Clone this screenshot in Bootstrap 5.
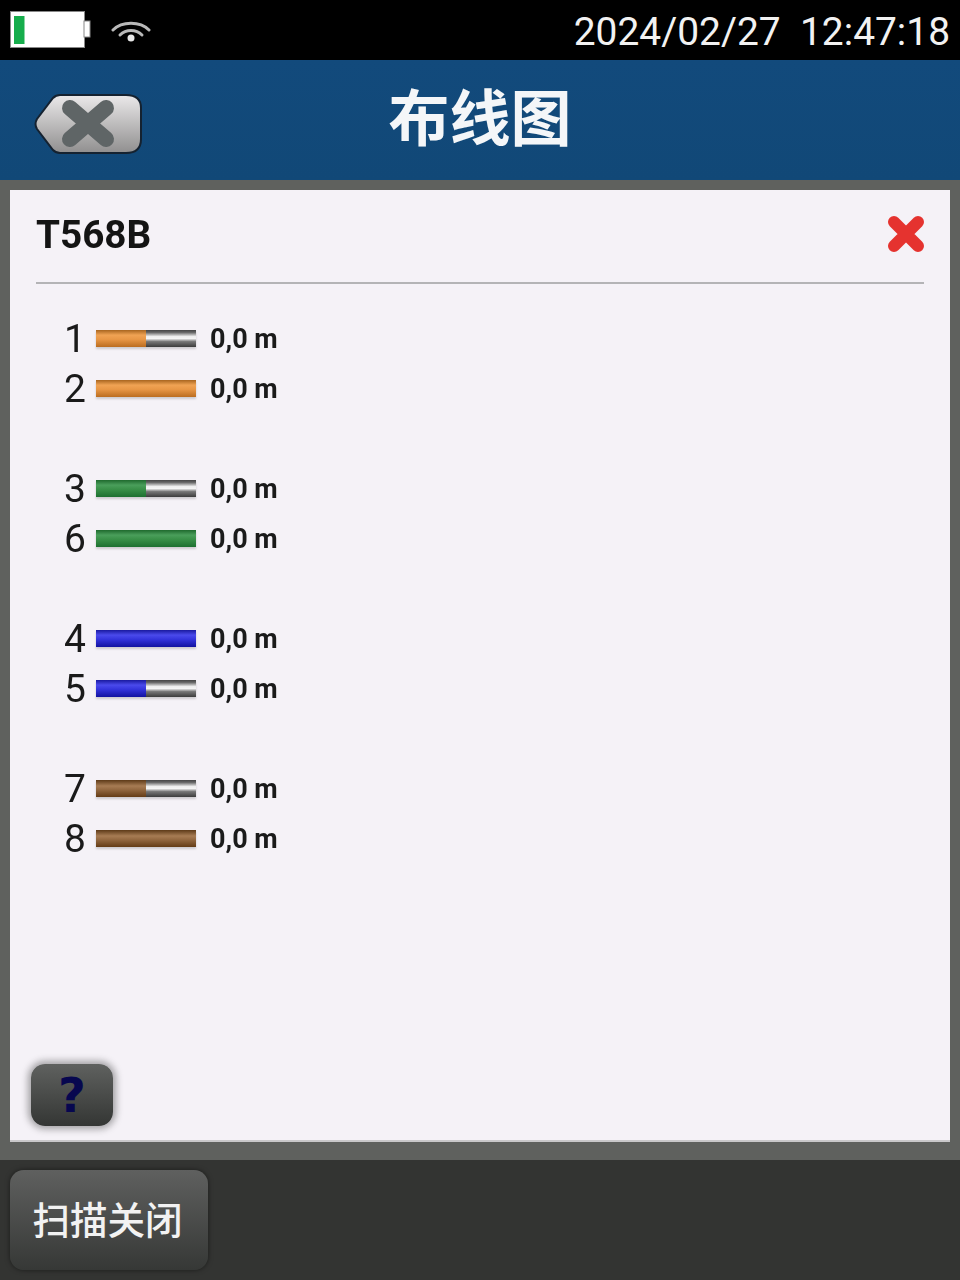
<!DOCTYPE html>
<html lang="zh"><head><meta charset="utf-8">
<link href="https://cdn.jsdelivr.net/npm/bootstrap@5.3.0/dist/css/bootstrap.min.css" rel="stylesheet">
<style>
html,body{margin:0;height:1280px;overflow:hidden}
body{font-family:Roboto,"Noto Sans CJK SC",sans-serif;background:#5f615e;color:#111}
.appshell{width:960px;height:1280px}
.statusrow{height:60px;background:#000;color:#f2f2f2;padding:0 10px}
.clock{font-size:38.900px;line-height:60px;margin-top:3px;white-space:pre}
.wifiicon{margin-left:19px}
.titlerow{height:120px;background:linear-gradient(#124a7c,#114877);padding-left:34px}
.backicon{margin-top:12px}
.titletext{left:0;right:0;top:0;bottom:0;font:700 61px/110px "Noto Sans CJK SC",sans-serif;color:#f4f6f8;text-align:center;pointer-events:none;filter:blur(.5px)}
.stage{height:980px;padding:10px 10px 18px}
.sheet{height:952px;background:#f5f2f7;padding:0 26px;border-bottom:2px solid #c9c8ca}
.sheethead{height:94px;border-bottom:2px solid #b4b4b6}
.sheettitle{font-size:38.700px;font-weight:700;line-height:1;margin:-2px 0 0;color:#141414;filter:blur(.5px)}
.closeicon{margin:-5px -1px 0 0;filter:blur(.6px)}
.wirelist{padding-top:29px}
.wiregroup{margin-bottom:50px}
.wirerow{height:50px}
.pinno{width:50px;text-align:right;font-size:39px;line-height:50px;margin-top:2px;color:#1a1a1a;filter:blur(.5px)}
.cable{width:100px;height:17px;margin-left:10px;box-shadow:0 2px 2px rgba(0,0,0,.16)}
.half{width:50px;height:100%}
.lenval{font-size:27px;font-weight:700;line-height:50px;margin-top:2px;margin-left:14px;color:#1a1a1a;filter:blur(.5px)}
.co{background:linear-gradient(#a8651f,#f0a354 30%,#e89746 55%,#bb6d20)}
.cg{background:linear-gradient(#1f6a2e,#4a9e5b 30%,#399048 55%,#1d7030)}
.cb{background:linear-gradient(#1a1aa0,#4a4aec 30%,#3434dc 55%,#1212a0)}
.cn{background:linear-gradient(#5d3a18,#a77c54 35%,#956a42 55%,#643c16)}
.cw{background:linear-gradient(#444,#666 14%,#eee 38%,#f4f4f4 50%,#777 68%,#3c3c3c)}
.helpbtn{left:21px;bottom:14px;width:82px;height:62px;border-radius:14px;background:linear-gradient(#5f615f,#343634);box-shadow:0 0 7px 3px rgba(40,40,40,.4);color:#07074f;font-size:48px;font-weight:900;line-height:62px;text-align:center;font-family:"DejaVu Sans",sans-serif}
.bottomrow{height:120px;background:#333432;padding:10px}
.scanbtn{width:198px;height:100px;border-radius:14px;border:0;background:linear-gradient(#5f605f,#363836);color:#f2f2f2;font:500 37.500px/96px "Noto Sans CJK SC",sans-serif;padding:0 3px 4px 0;box-shadow:0 0 5px rgba(0,0,0,.5)}
</style></head><body>
<div class="appshell d-flex flex-column">
 <div class="statusrow d-flex align-items-center justify-content-between">
  <div class="d-flex align-items-center">
   <svg width="82" height="38" viewBox="0 0 82 38"><rect x=".5" y=".5" width="74" height="36" fill="#fff" stroke="#888"/><rect x="74" y="10" width="6" height="16" fill="#fff" stroke="#888"/><rect x="4" y="5" width="10.500" height="28" fill="#16ad4c"/></svg>
   <svg class="wifiicon" width="40" height="26" viewBox="0 0 40 26" fill="none" stroke="#b9b9b9" stroke-linecap="round" stroke-width="3"><path d="M2 13C11 4 29 4 38 13"/><path d="M9 18C15 12 25 12 31 18"/><circle cx="20" cy="21" r="3.500" fill="#e8e8e8" stroke="none"/></svg>
  </div>
  <div class="clock">2024/02/27  12:47:18</div>
 </div>
 <div class="titlerow position-relative d-flex align-items-center">
  <svg class="backicon position-relative" width="110" height="66" viewBox="0 0 110 66"><defs><linearGradient id="bk" x1="0" y1="0" x2="0" y2="1"><stop offset="0" stop-color="#ebe9ea"/><stop offset="1" stop-color="#908f8f"/></linearGradient></defs><path d="M26 2H92Q107 2 107 15V46Q107 60 92 60H26Q22 60 19 57L3 36Q0 31 3 26L19 5Q22 2 26 2Z" fill="url(#bk)" stroke="#152230" stroke-width="2"/><path d="M36 15L72 46M72 15L36 46" stroke="#5f6566" stroke-width="16" stroke-linecap="round"/></svg>
  <div class="titletext position-absolute">布线图</div>
 </div>
 <div class="stage">
  <div class="sheet position-relative">
   <div class="sheethead d-flex align-items-center justify-content-between">
    <h1 class="sheettitle">T568B</h1>
    <svg class="closeicon" width="38" height="38" viewBox="0 0 38 38"><path d="M7 7L31 31M31 7L7 31" stroke="#e5332f" stroke-width="12" stroke-linecap="round"/></svg>
   </div>
   <div class="wirelist">
    <div class="wiregroup">
     <div class="wirerow d-flex align-items-center"><div class="pinno">1</div><div class="cable d-flex"><div class="half co"></div><div class="half cw"></div></div><div class="lenval">0,0 m</div></div>
     <div class="wirerow d-flex align-items-center"><div class="pinno">2</div><div class="cable co"></div><div class="lenval">0,0 m</div></div>
    </div>
    <div class="wiregroup">
     <div class="wirerow d-flex align-items-center"><div class="pinno">3</div><div class="cable d-flex"><div class="half cg"></div><div class="half cw"></div></div><div class="lenval">0,0 m</div></div>
     <div class="wirerow d-flex align-items-center"><div class="pinno">6</div><div class="cable cg"></div><div class="lenval">0,0 m</div></div>
    </div>
    <div class="wiregroup">
     <div class="wirerow d-flex align-items-center"><div class="pinno">4</div><div class="cable cb"></div><div class="lenval">0,0 m</div></div>
     <div class="wirerow d-flex align-items-center"><div class="pinno">5</div><div class="cable d-flex"><div class="half cb"></div><div class="half cw"></div></div><div class="lenval">0,0 m</div></div>
    </div>
    <div class="wiregroup">
     <div class="wirerow d-flex align-items-center"><div class="pinno">7</div><div class="cable d-flex"><div class="half cn"></div><div class="half cw"></div></div><div class="lenval">0,0 m</div></div>
     <div class="wirerow d-flex align-items-center"><div class="pinno">8</div><div class="cable cn"></div><div class="lenval">0,0 m</div></div>
    </div>
   </div>
   <div class="helpbtn position-absolute">?</div>
  </div>
 </div>
 <div class="bottomrow"><button class="scanbtn btn" type="button">扫描关闭</button></div>
</div>
</body></html>
